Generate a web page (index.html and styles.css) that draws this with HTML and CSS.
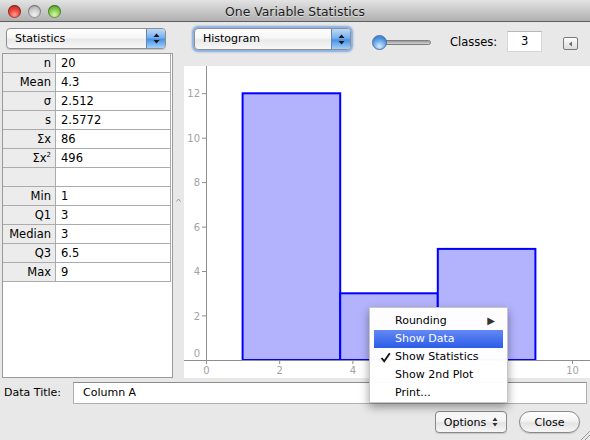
FILE: index.html
```html
<!DOCTYPE html>
<html>
<head>
<meta charset="utf-8">
<title>One Variable Statistics</title>
<link rel="stylesheet" href="styles.css">
</head>
<body>
<div class="window">
  <header class="titlebar">
    <div class="lights">
      <span class="light red"></span>
      <span class="light grey"></span>
      <span class="light green"></span>
    </div>
    <div class="title">One Variable Statistics</div>
    <div></div>
  </header>

  <div class="main">
    <section class="left">
      <div class="popup stats-popup">
        <span class="popup-label">Statistics</span>
        <span class="popup-arrows"><svg width="7" height="11" viewBox="0 0 7 11"><path d="M3.5 0.5 L6.5 4 H0.5 Z M3.5 10.5 L6.5 7 H0.5 Z" fill="#1a1a1a"/></svg></span>
      </div>
      <div class="table-pane">
        <div class="stats">
          <div class="lab">n</div><div class="val">20</div>
          <div class="lab">Mean</div><div class="val">4.3</div>
          <div class="lab">σ</div><div class="val">2.512</div>
          <div class="lab">s</div><div class="val">2.5772</div>
          <div class="lab">Σx</div><div class="val">86</div>
          <div class="lab">Σx<sup>2</sup></div><div class="val">496</div>
          <div class="lab"></div><div class="val"></div>
          <div class="lab">Min</div><div class="val">1</div>
          <div class="lab">Q1</div><div class="val">3</div>
          <div class="lab">Median</div><div class="val">3</div>
          <div class="lab">Q3</div><div class="val">6.5</div>
          <div class="lab">Max</div><div class="val">9</div>
        </div>
      </div>
    </section>

    <div class="divider">
      <svg width="5" height="4" viewBox="0 0 5 4"><path d="M0.5 3.5 L2.5 1 L4.5 3.5" fill="none" stroke="#9a9a9a" stroke-width="1"/></svg>
    </div>

    <section class="right">
      <div class="toolbar">
        <div class="popup hist-popup">
          <span class="popup-label">Histogram</span>
          <span class="popup-arrows"><svg width="7" height="11" viewBox="0 0 7 11"><path d="M3.5 0.5 L6.5 4 H0.5 Z M3.5 10.5 L6.5 7 H0.5 Z" fill="#1a1a1a"/></svg></span>
        </div>
        <div class="slider">
          <div class="track"></div>
          <div class="knob"></div>
        </div>
        <label class="classes-label">Classes:</label>
        <div class="classes-field">3</div>
        <div class="mini-btn"><svg width="5" height="6" viewBox="0 0 5 6"><path d="M4 0.5 V5.5 L0.8 3 Z" fill="#6e6e6e"/></svg></div>
      </div>
      <div class="chart">
        <svg class="plot" width="406" height="312" viewBox="0 0 406 312">
          <g class="bars" fill="#b3b3fd" stroke="#0000ff" stroke-width="2">
            <rect x="58.6" y="27.3" width="97.6" height="266.7"/>
            <rect x="156.2" y="227.3" width="97.6" height="66.7"/>
            <rect x="253.8" y="182.9" width="97.6" height="111.1"/>
          </g>
          <g stroke="#8e8e8e" stroke-width="1">
            <line x1="0" y1="294.5" x2="406" y2="294.5"/>
            <line x1="22.5" y1="0" x2="22.5" y2="298"/>
            <line x1="18" y1="249.9" x2="22" y2="249.9"/>
            <line x1="18" y1="205.5" x2="22" y2="205.5"/>
            <line x1="18" y1="161.1" x2="22" y2="161.1"/>
            <line x1="18" y1="116.6" x2="22" y2="116.6"/>
            <line x1="18" y1="72.2" x2="22" y2="72.2"/>
            <line x1="18" y1="27.7" x2="22" y2="27.7"/>
            <line x1="95.7" y1="295" x2="95.7" y2="298"/>
            <line x1="168.9" y1="295" x2="168.9" y2="298"/>
            <line x1="388.5" y1="295" x2="388.5" y2="298"/>
          </g>
          <g class="ticks" fill="#a3a3a3" font-size="10" text-anchor="end">
            <text x="16" y="291">0</text>
            <text x="16" y="253.5">2</text>
            <text x="16" y="209">4</text>
            <text x="16" y="164.6">6</text>
            <text x="16" y="120.2">8</text>
            <text x="16" y="75.7">10</text>
            <text x="16" y="31.3">12</text>
          </g>
          <g class="ticks" fill="#a3a3a3" font-size="10" text-anchor="middle">
            <text x="22.5" y="308">0</text>
            <text x="95.7" y="308">2</text>
            <text x="168.9" y="308">4</text>
            <text x="388.5" y="308">10</text>
          </g>
        </svg>
      </div>
    </section>
  </div>

  <div class="title-row">
    <span class="data-label">Data Title:</span>
    <div class="text-field">Column A</div>
  </div>

  <div class="button-row">
    <div class="btn options-btn">Options <svg width="6" height="10" viewBox="0 0 6 10"><path d="M3 0.5 L5.5 4 H0.5 Z M3 9.5 L5.5 6 H0.5 Z" fill="#333"/></svg></div>
    <div class="btn close-btn">Close</div>
  </div>

  <div class="grip">
    <svg width="10" height="10" viewBox="0 0 10 10"><path d="M10 1 L1 10 M10 5 L5 10" stroke="#9b9b9b" stroke-width="1"/></svg>
  </div>

  <ul class="menu">
    <li class="item"><span class="check"></span>Rounding<span class="submenu">▶</span></li>
    <li class="item active"><span class="check"></span>Show Data</li>
    <li class="item"><span class="check"><svg width="11" height="11" viewBox="0 0 11 11"><path d="M1.5 6 L4.2 9.2 L9.8 1.2" fill="none" stroke="#111" stroke-width="1.8"/></svg></span>Show Statistics</li>
    <li class="item"><span class="check"></span>Show 2nd Plot</li>
    <li class="item"><span class="check"></span>Print...</li>
  </ul>
</div>
</body>
</html>
```

FILE: styles.css
```css
* { box-sizing: border-box; }

html, body {
  margin: 0;
  padding: 0;
}

body {
  width: 590px;
  height: 440px;
  overflow: hidden;
  font-family: "DejaVu Sans", "Lucida Grande", sans-serif;
  font-size: 11px;
  color: #000;
  background: #e8e8e8;
}

.window {
  position: relative;
  width: 590px;
  height: 440px;
  display: flex;
  flex-direction: column;
  background: #e8e8e8;
}

/* ---------- title bar ---------- */
.titlebar {
  flex: none;
  height: 22px;
  display: grid;
  grid-template-columns: 1fr auto 1fr;
  align-items: center;
  background: linear-gradient(#e3e3e3, #b0b0b0);
  border-bottom: 1px solid #5f5f5f;
}

.lights {
  display: flex;
  gap: 7px;
  padding-left: 8px;
  padding-top: 1px;
}

.light {
  width: 13px;
  height: 13px;
  border-radius: 50%;
  box-shadow: inset 0 0 0 1px rgba(0, 0, 0, 0.35);
}

.light.red {
  background: radial-gradient(circle at 50% 75%, #ff9b8f 0%, #e8453c 45%, #a8201a 100%);
}

.light.grey {
  background: radial-gradient(circle at 50% 75%, #f2f2f2 0%, #c9c9c9 50%, #8e8e8e 100%);
}

.light.green {
  background: radial-gradient(circle at 50% 75%, #d8f7a8 0%, #7fc74a 50%, #3f8a1c 100%);
}

.title {
  font-size: 12.4px;
  color: #1c1c1c;
  text-shadow: 0 1px 0 rgba(255, 255, 255, 0.5);
  padding-top: 1px;
}

/* ---------- main split ---------- */
.main {
  flex: none;
  height: 356px;
  display: grid;
  grid-template-columns: 173px 11px 406px;
}

.left {
  display: flex;
  flex-direction: column;
  padding: 6px 0 0 2px;
}

.popup {
  display: flex;
  align-items: stretch;
  height: 21px;
  border: 1px solid #8f8f8f;
  border-radius: 4px;
  background: linear-gradient(#ffffff, #f6f6f6 45%, #e9e9e9 55%, #f7f7f7);
  box-shadow: 0 1px 1px rgba(0, 0, 0, 0.15);
  overflow: hidden;
}

.stats-popup {
  width: 160px;
  margin-left: 4px;
}

.popup-label {
  flex: 1;
  padding-left: 8px;
  line-height: 19px;
}

.popup-arrows {
  width: 19px;
  display: flex;
  align-items: center;
  justify-content: center;
  border-left: 1px solid #5f86bd;
  background: linear-gradient(#bcd9f8, #78b0ee 45%, #4b90e4 55%, #a3d1fa);
}

.table-pane {
  margin-top: 4px;
  flex: 1;
  background: #fff;
  border: 1px solid #9a9a9a;
}

.stats {
  display: grid;
  grid-template-columns: 53px 115px;
  grid-auto-rows: 19px;
  font-size: 11.5px;
}

.stats .lab,
.stats .val {
  border-bottom: 1px solid #ababab;
  border-right: 1px solid #ababab;
  line-height: 18px;
  white-space: nowrap;
}

.stats .lab {
  background: #ececec;
  text-align: right;
  padding-right: 4px;
}

.stats .val {
  background: #fff;
  padding-left: 5px;
}

.stats sup {
  font-size: 7px;
  line-height: 0;
  vertical-align: 5px;
}

.divider {
  display: flex;
  align-items: center;
  justify-content: center;
}

/* ---------- right side ---------- */
.right {
  display: flex;
  flex-direction: column;
}

.toolbar {
  flex: none;
  height: 44px;
  display: flex;
  align-items: flex-start;
  padding-top: 6px;
  padding-left: 10px;
}

.hist-popup {
  width: 157px;
  height: 22px;
  box-shadow: 0 0 0 1px #8db4e6, 0 0 2px 2px rgba(91, 145, 218, 0.75);
}

.hist-popup .popup-label {
  line-height: 20px;
}

.slider {
  position: relative;
  width: 60px;
  height: 15px;
  margin-left: 21px;
  margin-top: 7px;
}

.track {
  position: absolute;
  left: 7px;
  right: 1px;
  top: 5px;
  height: 5px;
  border-radius: 3px;
  border: 1px solid #7c7c7c;
  background: linear-gradient(#9a9a9a, #d4d4d4);
}

.knob {
  position: absolute;
  left: 0;
  top: 0;
  width: 15px;
  height: 15px;
  border-radius: 50%;
  border: 1px solid #4a6f9e;
  background: radial-gradient(circle at 50% 80%, #d6eeff 0%, #7db5ee 40%, #3f84d8 75%, #6aa2e3 100%);
}

.classes-label {
  margin-left: 18px;
  margin-top: 3px;
  line-height: 22px;
  font-size: 11.5px;
}

.classes-field {
  width: 35px;
  height: 21px;
  margin-left: 10px;
  margin-top: 3px;
  background: #fff;
  border: 1px solid #d6d6d6;
  border-top-color: #b8b8b8;
  text-align: center;
  line-height: 19px;
  font-size: 11.5px;
}

.mini-btn {
  width: 15px;
  height: 13px;
  margin-left: 21px;
  margin-top: 9px;
  border: 1px solid #7a7a7a;
  border-radius: 2px;
  background: linear-gradient(#fdfdfd, #dcdcdc);
  display: flex;
  align-items: center;
  justify-content: center;
}

.chart {
  flex: 1;
  background: #fff;
}

.plot {
  display: block;
  font-family: "DejaVu Sans", sans-serif;
}

/* ---------- bottom ---------- */
.title-row {
  flex: none;
  height: 29px;
  display: flex;
  align-items: center;
  padding: 0 3px 0 4px;
}

.data-label {
  width: 69px;
  font-size: 11px;
}

.text-field {
  flex: 1;
  height: 22px;
  background: #fff;
  border: 1px solid #b0b0b0;
  border-top-color: #8c8c8c;
  padding-left: 9px;
  line-height: 20px;
}

.button-row {
  flex: 1;
  display: flex;
  justify-content: flex-end;
  align-items: flex-start;
  gap: 12px;
  padding-top: 4px;
  padding-right: 10px;
}

.btn {
  height: 22px;
  display: flex;
  align-items: center;
  justify-content: center;
  gap: 6px;
  border: 1px solid #8a8a8a;
  background: linear-gradient(#ffffff, #f3f3f3 45%, #e4e4e4 55%, #f6f6f6);
  box-shadow: 0 1px 1px rgba(0, 0, 0, 0.15);
}

.options-btn {
  width: 72px;
  border-radius: 4px;
}

.close-btn {
  width: 61px;
  border-radius: 11px;
}

.grip {
  position: absolute;
  right: 0;
  bottom: 0;
  width: 10px;
  height: 10px;
}

.grip svg {
  display: block;
}

/* ---------- context menu ---------- */
.menu {
  position: absolute;
  left: 369px;
  top: 307px;
  width: 139px;
  margin: 0;
  padding: 4px 4px 0 4px;
  list-style: none;
  background: rgba(255, 255, 255, 0.97);
  border: 1px solid rgba(0, 0, 0, 0.22);
  box-shadow: 0 4px 9px rgba(0, 0, 0, 0.38);
  font-size: 11px;
}

.item {
  position: relative;
  height: 18px;
  line-height: 18px;
  display: flex;
  align-items: center;
}

.item.active {
  background: linear-gradient(#6488f4, #2b5de7);
  color: #fff;
}

.check {
  width: 21px;
  display: flex;
  justify-content: center;
  padding-left: 2px;
}

.check svg {
  display: block;
}

.submenu {
  margin-left: auto;
  margin-right: 8px;
  font-size: 10px;
  color: #333;
}
```
